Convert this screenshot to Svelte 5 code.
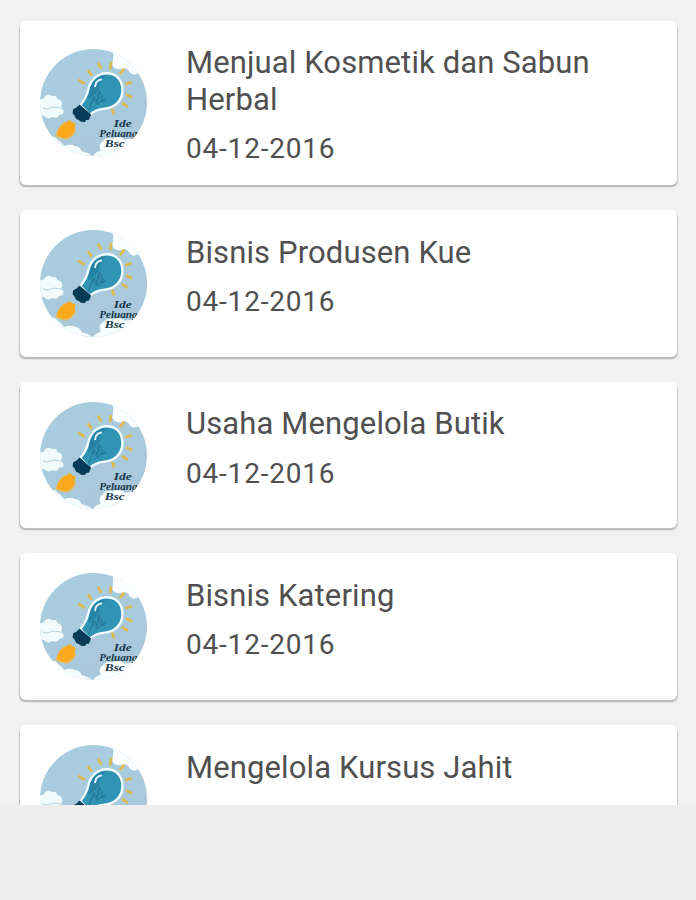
<script>
  const items = [
    { title: 'Menjual Kosmetik dan Sabun Herbal', date: '04-12-2016', tall: true },
    { title: 'Bisnis Produsen Kue', date: '04-12-2016' },
    { title: 'Usaha Mengelola Butik', date: '04-12-2016' },
    { title: 'Bisnis Katering', date: '04-12-2016' },
    { title: 'Mengelola Kursus Jahit' }
  ];
  const rays = [
    [145, 119, 164, 132], [174, 91, 186, 107], [205, 68, 214, 86], [244, 66, 241, 88],
    [284, 86, 270, 103], [306, 127, 286, 133], [288, 164, 308, 172], [277, 189, 294, 201], [247, 207, 253, 224]
  ];
</script>

<main>
  <div class="list">
    {#each items as item, i}
      <article class="card" class:tall={item.tall}>
        <svg class="logo" viewBox="30 27 322 322" aria-hidden="true">
          <defs>
            <clipPath id="round{i}"><circle cx="191" cy="188" r="161" /></clipPath>
            <linearGradient id="sky{i}" x1="0" y1="0" x2="0.3" y2="1">
              <stop offset="0" stop-color="#a8cddf" />
              <stop offset="1" stop-color="#a9c8dc" />
            </linearGradient>
          </defs>
          <g clip-path="url(#round{i})">
            <rect x="30" y="27" width="322" height="322" fill="url(#sky{i})" />
            <path d="M250 20V62Q244 72 252 82Q262 91 278 87Q292 80 300 98Q310 109 323 101L345 97V20Z" fill="#fafefe" />
            <path d="M25 176Q40 182 45 170Q55 160 67 169Q79 164 83 178Q98 180 97 194Q91 201 99 210Q106 224 88 225Q82 239 67 232Q52 242 42 229L25 230Z" fill="#f1fbfc" />
            <path d="M38 204Q51 211 61 205T96 206" fill="none" stroke="#b3d2dc" stroke-width="3" />
            <path d="M60 292Q77 288 83 300Q96 307 103 319Q121 311 136 319Q151 320 155 334Q174 339 188 348L60 352Z" fill="#f6fdfe" />
            <path d="M188 352Q197 336 213 333Q204 314 219 305Q230 290 249 296Q272 286 285 300L330 293V352Z" fill="#f8fdfe" />
            <g stroke="#dfb94c" stroke-width="8">
              {#each rays as [x1, y1, x2, y2]}
                <line {x1} {y1} {x2} {y2} />
              {/each}
            </g>
            <path d="M75 290L88 261L103 247L115 250L120 240L127 250L137 250L133 264L139 273L127 291L111 300L93 296Z" fill="#e5bd62" />
            <path d="M82 286Q82 266 101 253L117 242L137 252L132 277Q116 299 96 293Z" fill="#fba81b" />
            <path d="M151 196Q170 175 176 146C184 115 208 99 233 100C262 101 279 124 278 153C277 184 252 207 219 207Q197 209 180 225Z" fill="#3095b5" stroke="#f3fcff" stroke-width="7" stroke-linejoin="round" />
            <path d="M180 151C187 119 211 106 232 107Q209 117 208 146Q198 166 174 177Z" fill="#2582a5" />
            <path d="M196 139Q197 123 214 119" fill="none" stroke="#e1f7fb" stroke-width="6" stroke-linecap="round" />
            <path d="M176 211L193 171L202 185L208 154L217 174L226 180L208 187L197 198M185 175L207 195M202 164L220 187" fill="none" stroke="#24718f" stroke-width="3" />
            <path d="M149 194L184 224L177 240L169 241L165 247L153 246L147 241L139 238L134 227L128 220L130 208L139 204Z" fill="#073c57" />
            {#if item.date}
              <g class="brand">
                <text x="252" y="262" textLength="54" lengthAdjust="spacingAndGlyphs">Ide</text>
                <text x="208" y="292" textLength="116" lengthAdjust="spacingAndGlyphs">Peluang</text>
                <text x="225" y="323" textLength="60" lengthAdjust="spacingAndGlyphs">Bsc</text>
              </g>
            {/if}
          </g>
        </svg>
        <div class="copy">
          <h2>{item.title}</h2>
          {#if item.date}<time>{item.date}</time>{/if}
        </div>
      </article>
    {/each}
  </div>
</main>

<style>
  :global(body) { margin: 0; background: #eee; }
  main { height: 900px; overflow: hidden; background: #eee; font-family: Roboto, sans-serif; }
  .list {
    box-sizing: border-box;
    height: 805px;
    padding: 20.5px 19px 0 20px;
    display: flex;
    flex-direction: column;
    gap: 25px;
    overflow: hidden;
    background: #f1f1f1;
  }
  .card {
    box-sizing: border-box;
    flex: 0 0 146.7px;
    display: flex;
    align-items: center;
    padding-left: 20px;
    background: #fff;
    border-radius: 6px;
    box-shadow: 0 2px 1px #bdbdbd, -1px 2px 1px #c4c4c4, 1px 2px 1px #ccc;
  }
  .card.tall { flex-basis: 164.5px; }
  .logo { flex: none; width: 107px; height: 107px; }
  .brand { font: italic bold 28px "Liberation Serif", serif; fill: #17384a; }
  .copy { align-self: flex-start; padding: 24.5px 0 0 39px; width: 440px; color: #505050; }
  h2 { margin: 0; font-size: 31px; line-height: 36.5px; font-weight: 400; letter-spacing: 0.12px; }
  time { display: block; margin-top: 14px; font-size: 28px; line-height: 33px; letter-spacing: 0.8px; }
</style>
